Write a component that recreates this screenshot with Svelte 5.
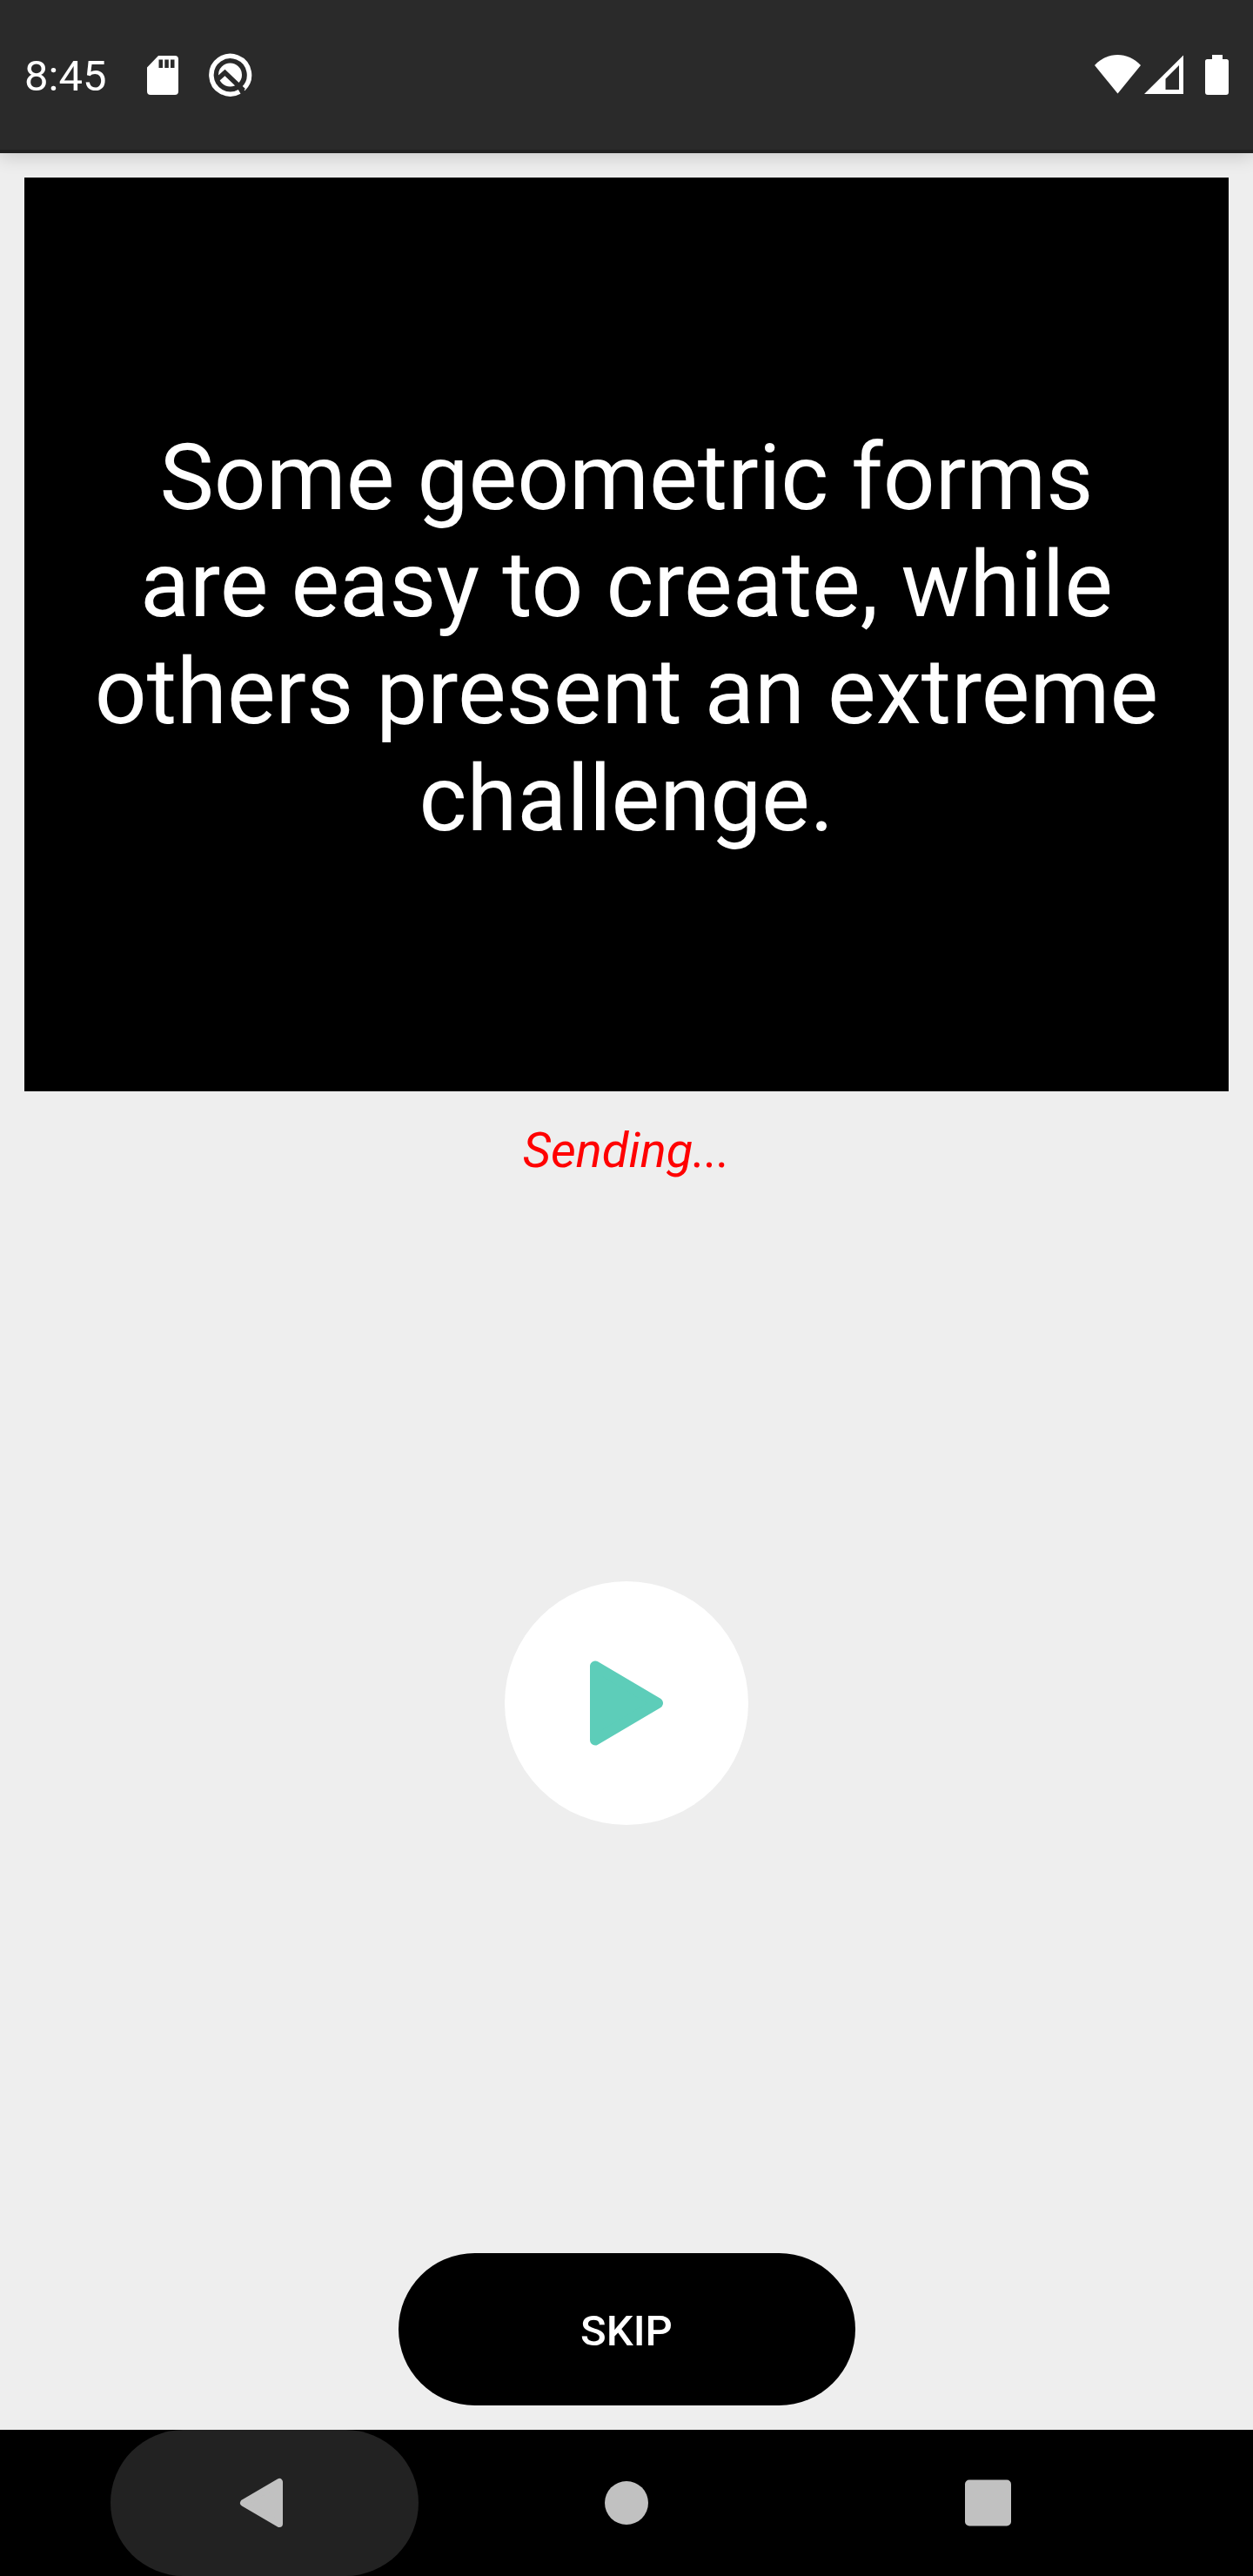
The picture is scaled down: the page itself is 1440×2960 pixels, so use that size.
<script>
  let playing = $state(false);
</script>

<div class="screen">
  <header class="status-bar">
    <div class="status-left">
      <time class="clock">8:45</time>
      <svg class="icon-sd" width="36" height="46" viewBox="0 -1 36 46" aria-hidden="true">
        <path fill="#fff" fill-rule="evenodd" d="M13 0H32a4 4 0 0 1 4 4V41a4 4 0 0 1-4 4H4a4 4 0 0 1-4-4V13.500zM13.500 4.500V14H18V4.500zM20.300 4.500V14H24.800V4.500zM27 4.500V14H31.500V4.500z" />
      </svg>
      <svg class="icon-debug" width="50" height="50" viewBox="0 0 50 50" aria-hidden="true">
        <path fill="none" stroke="#fff" stroke-width="5.500" d="M39.500 41.200A21.800 21.800 0 1 0 35.200 44.300" />
        <circle cx="24.500" cy="25" r="13.500" fill="#fff" />
        <path fill="none" stroke="#2a2a2a" stroke-width="5.500" d="M9.500 30.500L18.500 22.500L40 43" />
      </svg>
    </div>
    <div class="status-right">
      <svg width="53" height="46" viewBox="0 0 53 46" aria-hidden="true">
        <path fill="#fff" d="M0 12C15 -4 38 -4 53 12L26.500 44.500z" />
      </svg>
      <svg class="icon-signal" width="45" height="46" viewBox="0 0 45 46" aria-hidden="true">
        <path fill="#fff" fill-rule="evenodd" d="M45 .5V45H0zM40 12L24.500 27.500V40H40z" />
      </svg>
      <svg class="icon-battery" width="27" height="46" viewBox="0 0 27 46" aria-hidden="true">
        <path fill="#fff" d="M8 0H20V5H24.500A2.500 2.500 0 0 1 27 7.500V43A3 3 0 0 1 24 46H3A3 3 0 0 1 0 43V7.500A2.500 2.500 0 0 1 2.500 5H8z" />
      </svg>
    </div>
  </header>

  <main>
    <section class="prompt">
      <p>Some geometric forms are easy to create, while others present an extreme challenge.</p>
    </section>
    <p class="sending" role="status">Sending...</p>
    <div class="player">
      <button class="play" type="button" aria-label="Play" aria-pressed={playing} onclick={() => (playing = !playing)}>
        <svg width="280" height="280" viewBox="0 0 280 280" aria-hidden="true">
          <path fill="#5dcdb9" stroke="#5dcdb9" stroke-width="12" stroke-linejoin="round" d="M104 97.500V182.500L176 140z" />
        </svg>
      </button>
    </div>
    <button class="skip" type="button">SKIP</button>
  </main>

  <nav class="nav-bar" aria-label="System">
    <button class="pressed" type="button" aria-label="Back">
      <svg width="96" height="96" viewBox="0 0 96 96" aria-hidden="true">
        <path fill="#c1c1c1" stroke="#c1c1c1" stroke-width="8" stroke-linejoin="round" d="M65 24V72L24 48z" />
      </svg>
    </button>
    <button type="button" aria-label="Home">
      <svg width="96" height="96" viewBox="0 0 96 96" aria-hidden="true">
        <circle cx="48" cy="48" r="25" fill="#c1c1c1" />
      </svg>
    </button>
    <button type="button" aria-label="Recent apps">
      <svg width="96" height="96" viewBox="0 0 96 96" aria-hidden="true">
        <rect x="21" y="21.500" width="53" height="53" rx="5" fill="#c1c1c1" />
      </svg>
    </button>
  </nav>
</div>

<style>
  :global(body) {
    margin: 0;
    background: #eee;
  }

  .screen {
    display: flex;
    flex-direction: column;
    min-height: 100vh;
    font-family: Roboto, "Liberation Sans", sans-serif;
    background: #eee;
  }

  button {
    padding: 0;
    border: 0;
    font: inherit;
    cursor: pointer;
  }

  svg {
    display: block;
  }

  .status-bar {
    box-sizing: border-box;
    display: flex;
    justify-content: space-between;
    align-items: flex-start;
    height: 176px;
    padding: 58px 28px 0;
    border-bottom: 4px solid #212121;
    background: #2a2a2a;
    color: #fff;
    box-shadow: 0 4px 20px rgba(0, 0, 0, 0.16);
  }

  .status-left,
  .status-right {
    display: flex;
    align-items: center;
    height: 56px;
  }

  .clock {
    padding-top: 4px;
    font-size: 49px;
    line-height: 56px;
  }

  .icon-sd {
    margin-left: 47px;
  }

  .icon-debug {
    margin-left: 35px;
  }

  .icon-signal {
    margin-left: 4px;
  }

  .icon-battery {
    margin-left: 25px;
  }

  main {
    flex: 1;
    display: flex;
    flex-direction: column;
    align-items: center;
    padding: 28px;
  }

  .prompt {
    box-sizing: border-box;
    align-self: stretch;
    display: flex;
    align-items: center;
    justify-content: center;
    min-height: 1050px;
    padding: 10px 72px 0;
    background: #000;
    color: #fff;
    text-align: center;
  }

  .prompt p {
    margin: 0;
    font-size: 105px;
    line-height: 123px;
  }

  .sending {
    margin: 33px 0 0;
    font-size: 56px;
    font-style: italic;
    line-height: 71px;
    color: #f00;
  }

  .player {
    flex: 1;
    display: flex;
    align-items: center;
    margin-bottom: 33px;
  }

  .play {
    border-radius: 50%;
    background: #fff;
  }

  .skip {
    box-sizing: border-box;
    width: 525px;
    height: 175px;
    padding-top: 4px;
    border-radius: 88px;
    background: #000;
    color: #fff;
    font-size: 49px;
    font-weight: 500;
  }

  .nav-bar {
    display: flex;
    justify-content: center;
    gap: 62px;
    height: 168px;
    background: #000;
  }

  .nav-bar button {
    display: flex;
    align-items: center;
    justify-content: center;
    width: 354px;
    border-radius: 84px;
    background: transparent;
  }

  .nav-bar .pressed {
    background: #222;
  }
</style>
